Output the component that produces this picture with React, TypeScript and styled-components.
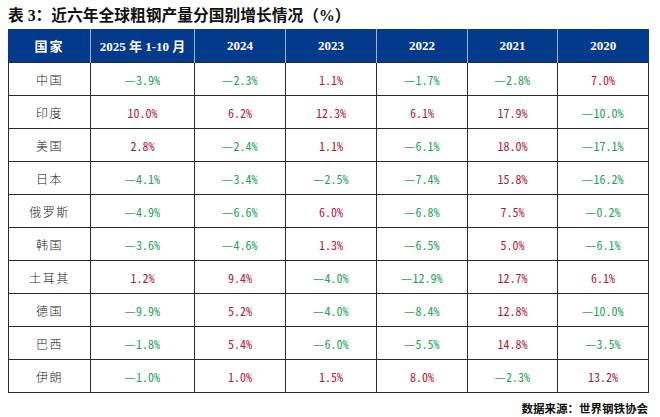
import styled, { createGlobalStyle } from "styled-components";

const GlobalStyle = createGlobalStyle`
    html, body {
        margin: 0;
        padding: 0;
        background: #ffffff;
    }
`;

const Page = styled.div`
    width: 660px;
    height: 417px;
    padding: 0 12px 0 8px;
    box-sizing: border-box;
    display: flex;
    flex-direction: column;
    font-family: "Liberation Serif", "Noto Sans CJK SC", serif;
    color: #111;
`;

const Title = styled.div`
    height: 29px;
    display: flex;
    align-items: center;
    font-size: 15.75px;
    font-weight: 700;
`;

const Table = styled.table`
    width: 640px;
    border-collapse: collapse;
    table-layout: fixed;
`;

const HeadCell = styled.th`
    height: 33px;
    padding: 0;
    background: #033a8b;
    color: #ffffff;
    font-family: "Liberation Serif", "Noto Sans CJK SC", serif;
    font-size: 13px;
    font-weight: 700;
    text-align: center;
    border-left: 1px solid #9fb3d6;
    &:first-child {
        border-left: 1px solid #033a8b;
        letter-spacing: 2px;
    }
`;

const Row = styled.tr`
    height: 33px;
`;

const NameCell = styled.td`
    padding: 0;
    border: 1px solid #2a2a2a;
    text-align: center;
    font-family: "Noto Sans CJK SC", sans-serif;
    font-size: 12px;
    font-weight: 300;
    letter-spacing: 1.5px;
    color: #222;
`;

const ValueCell = styled.td<{ negative: boolean }>`
    padding: 0;
    border: 1px solid #2a2a2a;
    text-align: center;
    font-family: "Noto Sans Mono CJK SC", "Liberation Mono", monospace;
    font-size: 12px;
    color: ${({ negative }) => (negative ? "#22a35a" : "#b01a38")};
`;

const MinusSign = styled.span`
    font-family: "Liberation Sans", sans-serif;
    font-size: 10px;
    margin-right: 1px;
    position: relative;
    top: -1px;
`;

const Source = styled.div`
    margin-top: 8px;
    width: 640px;
    text-align: right;
    font-family: "Liberation Serif", "Noto Sans CJK SC", serif;
    font-size: 11.5px;
    font-weight: 700;
    line-height: 16px;
`;

const columns = ["国家", "2025 年 1-10 月", "2024", "2023", "2022", "2021", "2020"];
const widths = [82, 104, 91, 91, 91, 90, 91];

const data: [string, number[]][] = [
    ["中国", [-3.9, -2.3, 1.1, -1.7, -2.8, 7.0]],
    ["印度", [10.0, 6.2, 12.3, 6.1, 17.9, -10.0]],
    ["美国", [2.8, -2.4, 1.1, -6.1, 18.0, -17.1]],
    ["日本", [-4.1, -3.4, -2.5, -7.4, 15.8, -16.2]],
    ["俄罗斯", [-4.9, -6.6, 6.0, -6.8, 7.5, -0.2]],
    ["韩国", [-3.6, -4.6, 1.3, -6.5, 5.0, -6.1]],
    ["土耳其", [1.2, 9.4, -4.0, -12.9, 12.7, 6.1]],
    ["德国", [-9.9, 5.2, -4.0, -8.4, 12.8, -10.0]],
    ["巴西", [-1.8, 5.4, -6.0, -5.5, 14.8, -3.5]],
    ["伊朗", [-1.0, 1.0, 1.5, 8.0, -2.3, 13.2]],
];

export default function App() {
    return (
        <>
            <GlobalStyle />
            <Page>
                <Title>表 3：近六年全球粗钢产量分国别增长情况（%）</Title>
                <Table>
                    <colgroup>
                        {widths.map((w, i) => (
                            <col key={i} style={{ width: w }} />
                        ))}
                    </colgroup>
                    <thead>
                        <tr>
                            {columns.map((c) => (
                                <HeadCell key={c}>{c}</HeadCell>
                            ))}
                        </tr>
                    </thead>
                    <tbody>
                        {data.map(([name, values]) => (
                            <Row key={name}>
                                <NameCell>{name}</NameCell>
                                {values.map((v, i) => (
                                    <ValueCell key={i} negative={v < 0}>
                                        {v < 0 && <MinusSign>—</MinusSign>}
                                        {Math.abs(v).toFixed(1)}%
                                    </ValueCell>
                                ))}
                            </Row>
                        ))}
                    </tbody>
                </Table>
                <Source>数据来源：世界钢铁协会</Source>
            </Page>
        </>
    );
}
